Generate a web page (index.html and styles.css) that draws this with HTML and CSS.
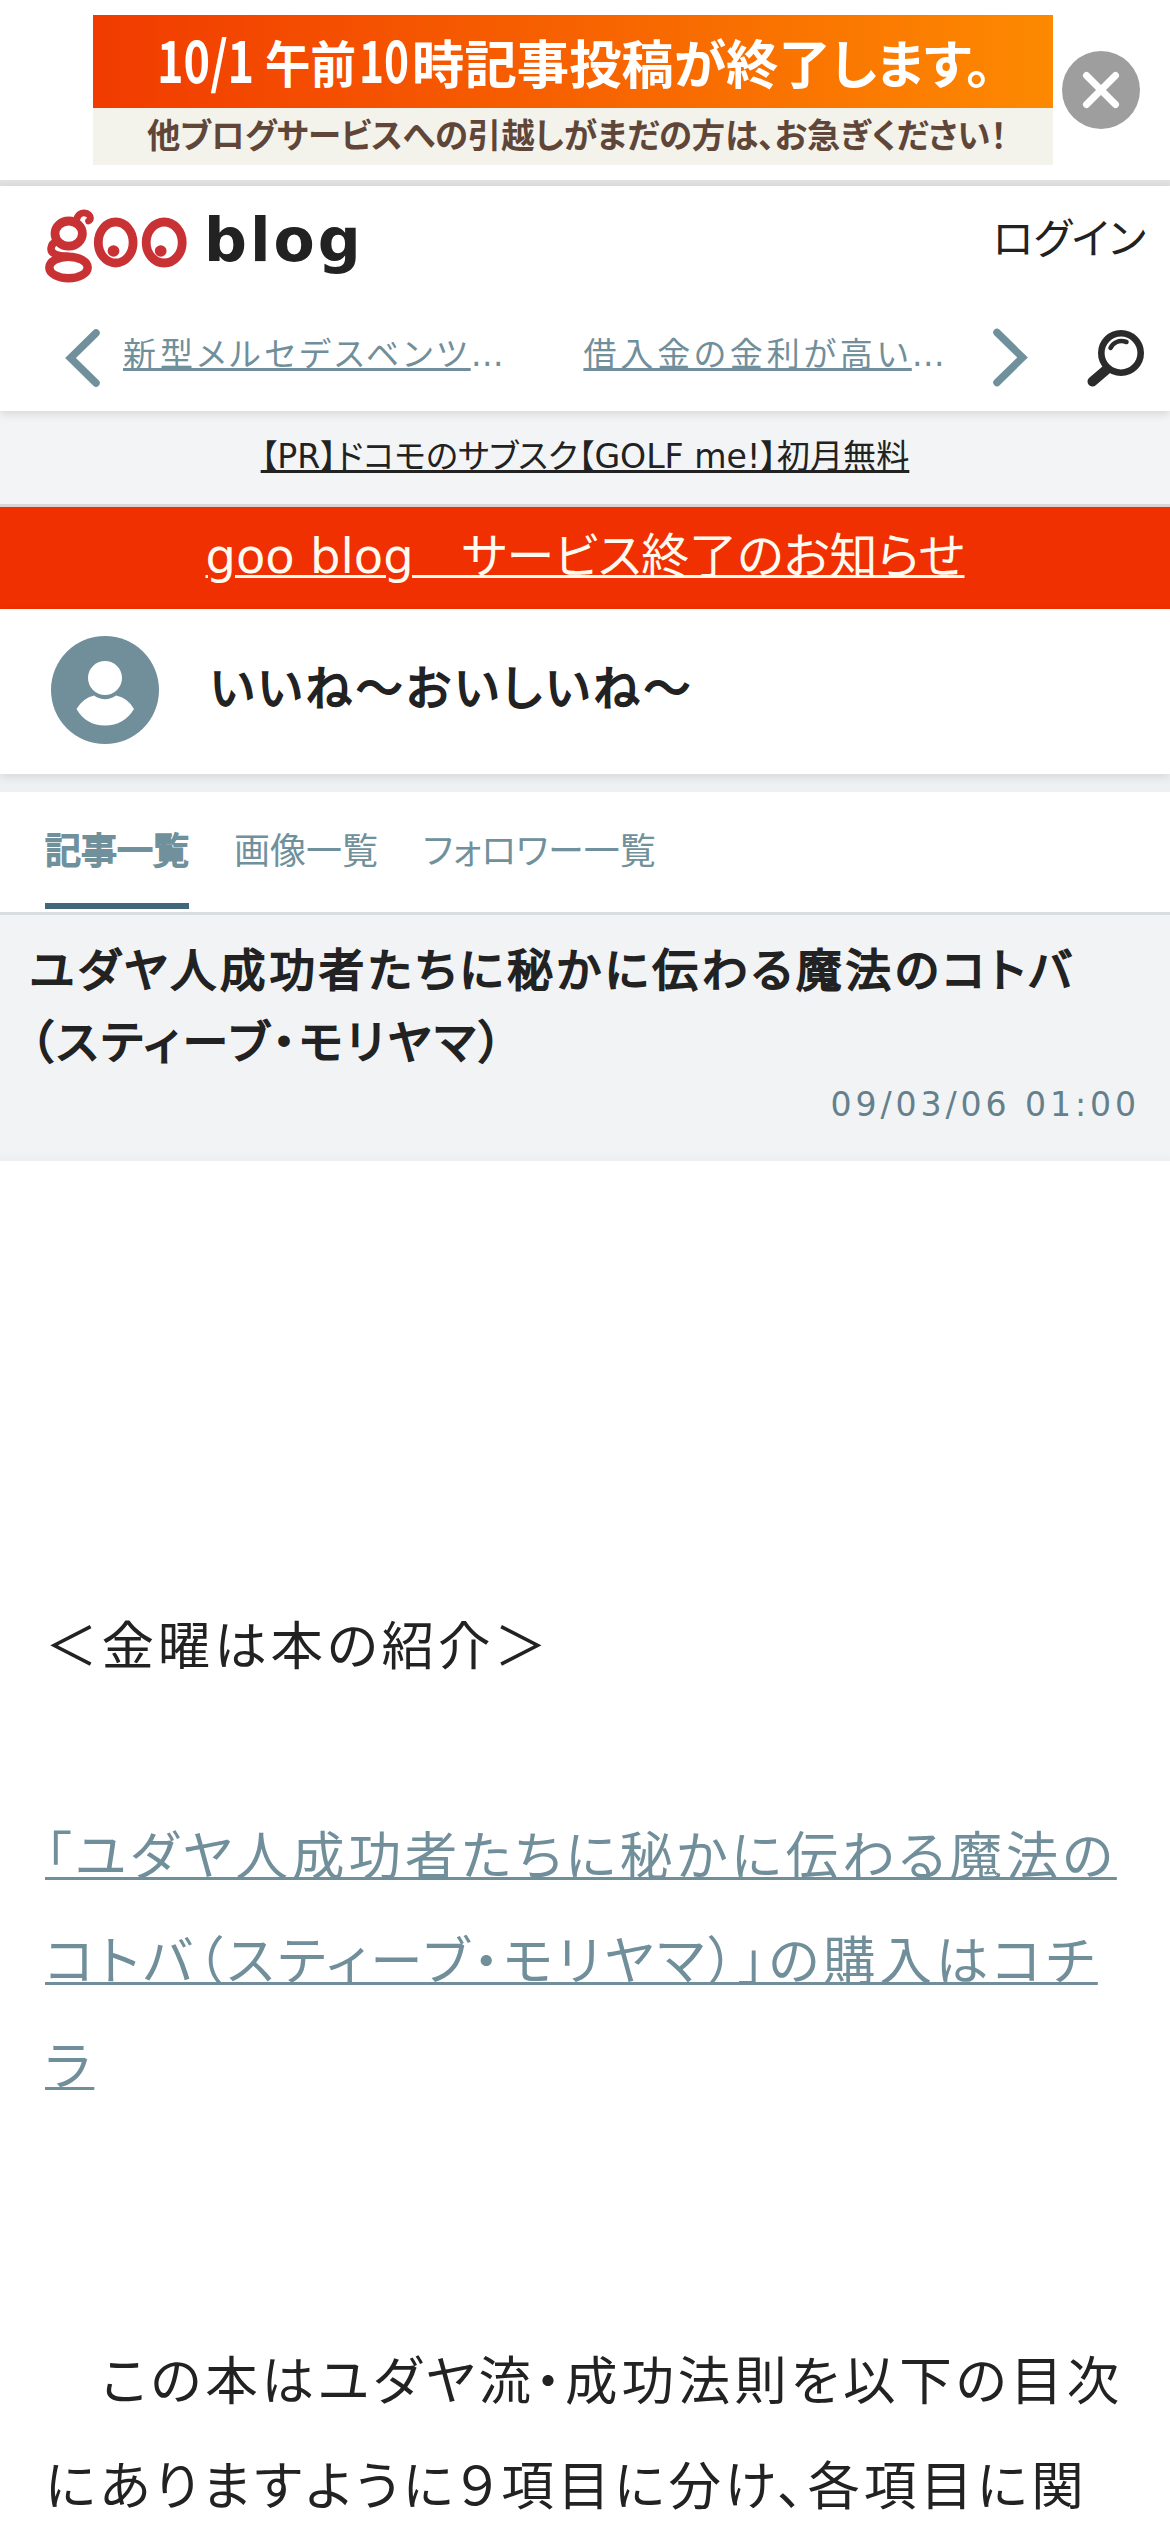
FILE: index.html
```
<!DOCTYPE html>
<html lang="ja">
<head>
<meta charset="utf-8">
<title>goo blog</title>
<link rel="stylesheet" href="styles.css">
</head>
<body>
<aside class="notice">
  <svg class="notice-banner" viewBox="0 0 960 150">
    <defs>
      <linearGradient id="orange" x1="0" x2="1" y1="0" y2="0">
        <stop offset="0" stop-color="#f13b00"/>
        <stop offset="1" stop-color="#fd8900"/>
      </linearGradient>
    </defs>
    <rect width="960" height="150" fill="#f3f2eb"/>
    <rect width="960" height="93" fill="url(#orange)"/>
    <g class="notice-main">
      <text transform="translate(64 68) scale(.79 1)" font-size="57">10/1</text>
      <text transform="translate(172 68) scale(.91 1)" font-size="50">午前</text>
      <text transform="translate(266 68) scale(.745 1)" font-size="57">10</text>
      <text x="319" y="69" font-size="52" textLength="580" lengthAdjust="spacingAndGlyphs">時記事投稿が終了します。</text>
    </g>
    <text class="notice-sub" x="54" y="133" font-size="34" textLength="860" lengthAdjust="spacingAndGlyphs">他ブログサービスへの引越しがまだの方は、お急ぎください！</text>
  </svg>
  <svg class="close" viewBox="0 0 78 78">
    <circle cx="39" cy="39" r="39" fill="#9e9e9e"/>
    <path d="M24.5 24.5L53.5 53.5M53.5 24.5L24.5 53.5" stroke="#fff" stroke-width="7" stroke-linecap="round"/>
  </svg>
</aside>

<header class="header">
  <div class="brand-row">
    <svg class="logo" viewBox="45 208 143 76" fill="none" stroke="#c93235">
      <ellipse cx="68.7" cy="233.6" rx="13.7" ry="12.6" stroke-width="8.8"/>
      <path d="M76.500 223C76 214.500 82 211.500 87 213.500C91.500 215.500 91 220.500 88.500 221" stroke-width="6.800" stroke-linecap="round"/>
      <path d="M57 241C50 244 48.500 252 56 254.500C60 256 64 256 68.500 256.200" stroke-width="7.500"/>
      <ellipse cx="68.5" cy="267.5" rx="19.2" ry="10.8" stroke-width="8.4"/>
      <ellipse cx="115.700" cy="242.5" rx="17.400" ry="20.500" stroke-width="8.800"/>
      <ellipse cx="164.200" cy="242.5" rx="18" ry="20.500" stroke-width="8.800"/>
      <ellipse cx="113.500" cy="251" rx="5.900" ry="5.800" fill="#c93235" stroke="none"/>
      <ellipse cx="160.700" cy="251" rx="5.900" ry="5.800" fill="#c93235" stroke="none"/>
    </svg>
    <span class="brand">blog</span>
    <a class="login">ログイン</a>
  </div>
  <nav class="topics">
    <svg class="chevron" viewBox="0 0 36 60"><path d="M31 5L5.500 30L31 55"/></svg>
    <div class="topic"><a>新型メルセデスベンツ</a>…</div>
    <div class="topic"><a>借入金の金利が高い</a>…</div>
    <svg class="chevron" viewBox="0 0 36 60"><path d="M5 4.500L30.500 29.500L5 54.500"/></svg>
    <svg class="search" viewBox="0 0 60 60" fill="none" stroke="#2b2b2b" stroke-linecap="round">
      <circle cx="35" cy="25" r="19.700" stroke-width="6.600"/>
      <path d="M20 42L6.500 53.500" stroke-width="10"/>
      <path d="M24.500 20C27 14.500 33 11.500 40.500 14" stroke-width="4.500"/>
    </svg>
  </nav>
</header>

<div class="pr"><a>【PR】ドコモのサブスク【GOLF me!】初月無料</a></div>
<div class="closing"><a>goo blog　サービス終了のお知らせ</a></div>

<section class="profile">
  <svg class="avatar" viewBox="0 0 108 108">
    <circle cx="54" cy="54" r="54" fill="#718f9a"/>
    <ellipse cx="54" cy="42" rx="17" ry="17" fill="#fff"/>
    <path d="M25.500 73Q32 62 43 59.500Q54 67 65 59.500Q77 62 83 73Q73 89.500 54 89.500Q35 89.500 25.500 73Z" fill="#fff"/>
  </svg>
  <h1 class="blog-name">いいね～おいしいね～</h1>
</section>

<nav class="tabs">
  <a class="tab active">記事一覧</a>
  <a class="tab">画像一覧</a>
  <a class="tab">フォロワー一覧</a>
</nav>

<section class="entry-head">
  <h2 class="entry-title">ユダヤ人成功者たちに秘かに伝わる魔法のコトバ<br>（スティーブ・モリヤマ）</h2>
  <time class="entry-date">09/03/06 01:00</time>
</section>

<article class="entry">
  <p>＜金曜は本の紹介＞</p>
  <p class="gap-one"><a>「ユダヤ人成功者たちに秘かに伝わる魔法の<br>コトバ（スティーブ・モリヤマ）」の購入はコチ<br>ラ</a></p>
  <p class="gap-two">　この本はユダヤ流・成功法則を以下の目次<br>にありますように９項目に分け、各項目に関</p>
</article>
</body>
</html>
```
FILE: styles.css
```
* { box-sizing: border-box; margin: 0; padding: 0; }

body {
  width: 1170px;
  height: 2532px;
  overflow: hidden;
  background: #fff;
  color: #222;
  font-family: "DejaVu Sans", "Noto Sans CJK JP", sans-serif;
  font-feature-settings: "palt";
  letter-spacing: 3.9px;
  white-space: nowrap;
}

svg { display: block; flex: none; }

a {
  color: inherit;
  text-decoration-thickness: 3px;
}

/* Service notice */
.notice {
  display: flex;
  align-items: flex-start;
  gap: 9px;
  height: 186px;
  padding: 15px 0 0 93px;
  border-bottom: 6px solid #e1e1e1;
  letter-spacing: 0;
}
.notice-banner { width: 960px; height: 150px; }
.notice-main,
.notice-sub {
  font-family: "Noto Sans CJK JP", sans-serif;
  font-weight: 700;
}
.notice-main { fill: #fff; }
.notice-sub { fill: #5f4638; }
.close { width: 78px; height: 78px; margin-top: 36px; }

/* Header */
.header {
  position: relative;
  height: 225px;
  background: #fff;
  box-shadow: 0 3px 9px rgba(0, 0, 0, .12);
}
.brand-row {
  display: flex;
  align-items: flex-start;
  height: 129px;
  padding: 22px 24px 0 45px;
}
.logo { width: 143px; height: 76px; }
.brand {
  margin-left: 16px;
  font-size: 60px;
  font-weight: 700;
  line-height: 64px;
  letter-spacing: 3px;
}
.login {
  margin-left: auto;
  font-size: 42px;
  line-height: 64px;
  letter-spacing: 0;
}
.topics {
  display: flex;
  align-items: flex-start;
  padding: 13px 24px 0 65px;
}
.chevron {
  width: 36px;
  height: 60px;
  fill: none;
  stroke: #70919b;
  stroke-width: 7.5;
  stroke-linecap: round;
}
.topic {
  width: 462px;
  margin-left: 22px;
  font-size: 33px;
  line-height: 53px;
  color: #718f9a;
}
.topic + .topic { width: 410px; margin-left: 0; }
.topic a { text-decoration-line: underline; }
.search { width: 60px; height: 60px; margin-left: 58px; }

/* Announcement strips */
.pr {
  height: 96px;
  padding-top: 20px;
  border-bottom: 3px solid #dcd5d1;
  background: #f2f4f6;
  text-align: center;
  font-size: 33.15px;
  line-height: 51px;
  letter-spacing: 0;
}
.pr a,
.closing a,
.entry a { text-decoration-line: underline; }
.closing {
  height: 102px;
  background: #f03000;
  color: #fffaf0;
  text-align: center;
  font-size: 48px;
  line-height: 99px;
  letter-spacing: 0;
}

/* Profile */
.profile {
  position: relative;
  display: flex;
  align-items: flex-start;
  gap: 51px;
  height: 165px;
  padding: 27px 51px 0;
  background: #fff;
  box-shadow: 0 3px 9px rgba(0, 0, 0, .1);
}
.avatar { width: 108px; height: 108px; }

/* Semi-bold headings: regular outlines thickened by a stroke */
.blog-name,
.entry-title,
.tab.active {
  font-weight: 400;
  -webkit-text-stroke: 1.9px currentColor;
}
.blog-name { font-size: 46.4px; line-height: 106px; }

/* Tabs */
.tabs {
  display: flex;
  gap: 45px;
  height: 141px;
  padding-left: 45px;
  border-top: 18px solid #eef0f1;
  border-bottom: 3px solid #d8dddf;
  color: #70919b;
  font-size: 36px;
  letter-spacing: 0;
}
.tab { height: 117px; line-height: 120px; }
.tab.active { border-bottom: 6px solid #42677a; }

/* Entry */
.entry-head {
  height: 246px;
  padding: 21px 30px 0;
  background: linear-gradient(#f1f3f5 96%, #eceeef);
}
.entry-title { font-size: 45.5px; line-height: 72px; }
.entry-date {
  display: block;
  color: #64808d;
  font-size: 33.15px;
  line-height: 50px;
  text-align: right;
}
.entry {
  padding: 433px 45px 0;
  font-size: 52.5px;
  line-height: 105px;
}
.entry a { color: #718f9a; }
.gap-one { margin-top: 105px; }
.gap-two { margin-top: 210px; }
```
